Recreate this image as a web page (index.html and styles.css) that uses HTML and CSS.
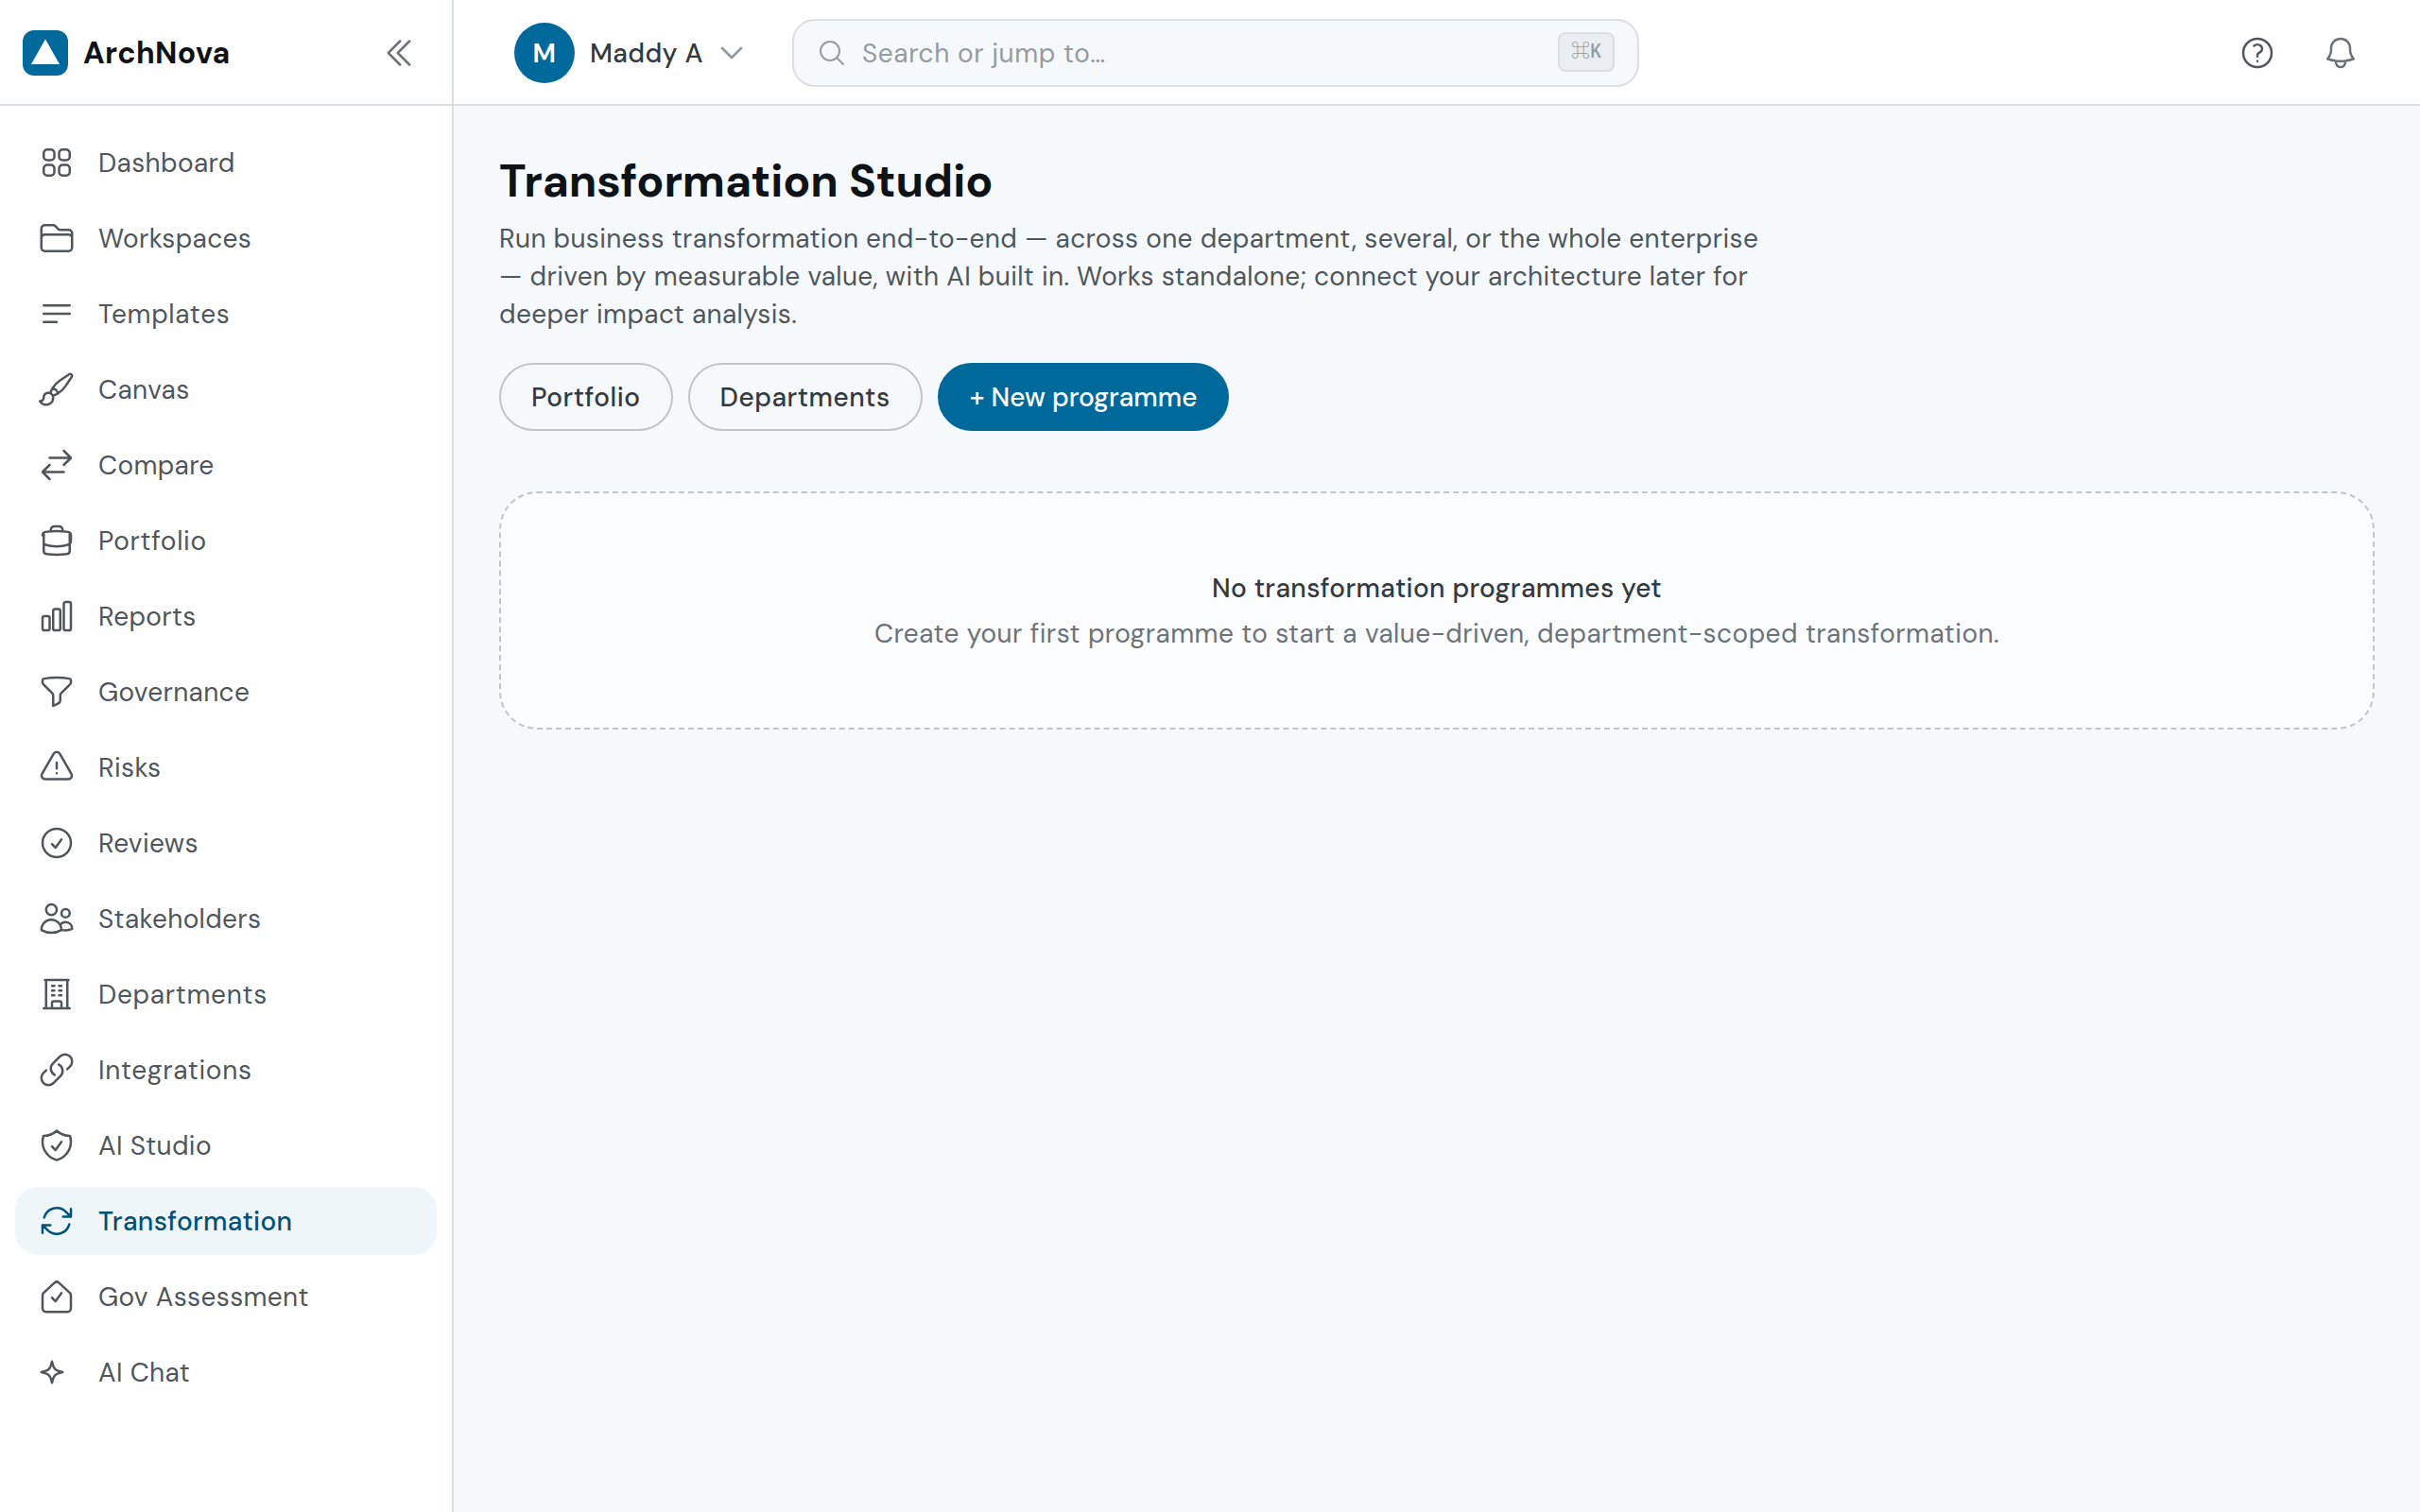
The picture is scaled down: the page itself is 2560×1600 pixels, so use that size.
FILE: index.html
```html
<!DOCTYPE html>
<html lang="en">
<head>
    <meta charset="UTF-8">
    <meta name="viewport" content="width=device-width, initial-scale=1.0">
    <title>Transformation Studio - ArchNova</title>
    <link rel="stylesheet" href="styles.css">
</head>
<body>
    <aside class="sidebar">
        <div class="sidebar-header">
            <svg class="logo" viewBox="0 0 48 48"><rect width="48" height="48" rx="12" fill="#00699c"/><path d="M24 9.5 39 36H9Z" fill="#fff"/></svg>
            <span class="brand">ArchNova</span>
            <button class="collapse" aria-label="Collapse sidebar">
                <svg class="icon" viewBox="0 0 24 24"><path d="m18.75 4.5-7.5 7.5 7.5 7.5m-6-15L5.25 12l7.5 7.5"/></svg>
            </button>
        </div>
        <nav class="nav">
            <a class="nav-item">
                <svg class="icon" viewBox="0 0 24 24"><path d="M3.75 6A2.25 2.25 0 0 1 6 3.75h2.25A2.25 2.25 0 0 1 10.5 6v2.25a2.25 2.25 0 0 1-2.25 2.25H6a2.25 2.25 0 0 1-2.25-2.25V6ZM3.75 15.75A2.25 2.25 0 0 1 6 13.5h2.25a2.25 2.25 0 0 1 2.25 2.25V18a2.25 2.25 0 0 1-2.25 2.25H6A2.25 2.25 0 0 1 3.75 18v-2.25ZM13.5 6a2.25 2.25 0 0 1 2.25-2.25H18A2.25 2.25 0 0 1 20.25 6v2.25A2.25 2.25 0 0 1 18 10.5h-2.25a2.25 2.25 0 0 1-2.25-2.25V6ZM13.5 15.75a2.25 2.25 0 0 1 2.25-2.25H18a2.25 2.25 0 0 1 2.25 2.25V18A2.25 2.25 0 0 1 18 20.25h-2.25A2.25 2.25 0 0 1 13.5 18v-2.25Z"/></svg>
                <span>Dashboard</span>
            </a>
            <a class="nav-item">
                <svg class="icon" viewBox="0 0 24 24"><path d="M2.25 12.75V12A2.25 2.25 0 0 1 4.5 9.75h15A2.25 2.25 0 0 1 21.75 12v.75m-8.69-6.44-2.12-2.12a1.5 1.5 0 0 0-1.061-.44H4.5A2.25 2.25 0 0 0 2.25 6v12a2.25 2.25 0 0 0 2.25 2.25h15A2.25 2.25 0 0 0 21.75 18V9a2.25 2.25 0 0 0-2.25-2.25h-5.379a1.5 1.5 0 0 1-1.06-.44Z"/></svg>
                <span>Workspaces</span>
            </a>
            <a class="nav-item wide">
                <svg class="icon" viewBox="0 0 24 24"><path d="M3.75 6.75h16.5M3.75 12h16.5m-16.5 5.25H12"/></svg>
                <span>Templates</span>
            </a>
            <a class="nav-item">
                <svg class="icon" viewBox="0 0 24 24"><path d="M9.53 16.122a3 3 0 0 0-5.78 1.128 2.25 2.25 0 0 1-2.4 2.245 4.5 4.5 0 0 0 8.4-2.245c0-.399-.078-.78-.22-1.128Zm0 0a15.998 15.998 0 0 0 3.388-1.62m-5.043-.025a15.994 15.994 0 0 1 1.622-3.395m3.42 3.42a15.995 15.995 0 0 0 4.764-4.648l3.876-5.814a1.151 1.151 0 0 0-1.597-1.597L14.146 6.32a15.996 15.996 0 0 0-4.649 4.763m3.42 3.42a6.776 6.776 0 0 0-3.42-3.42"/></svg>
                <span>Canvas</span>
            </a>
            <a class="nav-item">
                <svg class="icon" viewBox="0 0 24 24"><path d="M7.5 21 3 16.5m0 0L7.5 12M3 16.5h13.5m0-13.5L21 7.5m0 0L16.5 12M21 7.5H7.5"/></svg>
                <span>Compare</span>
            </a>
            <a class="nav-item wide">
                <svg class="icon" viewBox="0 0 24 24"><path d="M20.25 14.15v4.25c0 1.094-.787 2.036-1.872 2.18-2.087.277-4.216.42-6.378.42s-4.291-.143-6.378-.42c-1.085-.144-1.872-1.086-1.872-2.18v-10.6m16.5 6.35a2.18 2.18 0 0 0 .75-1.661V8.706c0-1.081-.768-2.015-1.837-2.175A48.114 48.114 0 0 0 12 6c-2.4 0-4.8.18-7.163.531C3.768 6.691 3 7.625 3 8.706M20.25 14.15V8m0 6.15c-.194.165-.42.295-.673.38A23.978 23.978 0 0 1 12 15.75c-2.648 0-5.195-.429-7.577-1.22a2.016 2.016 0 0 1-.673-.38M15.75 6.144V5.25A2.25 2.25 0 0 0 13.5 3h-3a2.25 2.25 0 0 0-2.25 2.25v.894"/></svg>
                <span>Portfolio</span>
            </a>
            <a class="nav-item">
                <svg class="icon" viewBox="0 0 24 24"><path d="M3 13.125C3 12.504 3.504 12 4.125 12h2.25c.621 0 1.125.504 1.125 1.125v6.75C7.5 20.496 6.996 21 6.375 21h-2.25A1.125 1.125 0 0 1 3 19.875v-6.75ZM9.75 8.625c0-.621.504-1.125 1.125-1.125h2.25c.621 0 1.125.504 1.125 1.125v11.25c0 .621-.504 1.125-1.125 1.125h-2.25a1.125 1.125 0 0 1-1.125-1.125V8.625ZM16.5 4.125c0-.621.504-1.125 1.125-1.125h2.25C20.496 3 21 3.504 21 4.125v15.75c0 .621-.504 1.125-1.125 1.125h-2.25a1.125 1.125 0 0 1-1.125-1.125V4.125Z"/></svg>
                <span>Reports</span>
            </a>
            <a class="nav-item">
                <svg class="icon" viewBox="0 0 24 24"><path d="M12 3c2.755 0 5.455.232 8.083.678.533.09.917.556.917 1.096v1.044a2.25 2.25 0 0 1-.659 1.591l-5.432 5.432a2.25 2.25 0 0 0-.659 1.591v2.927a2.25 2.25 0 0 1-1.244 2.013L9.75 21v-6.568a2.25 2.25 0 0 0-.659-1.591L3.659 7.409A2.25 2.25 0 0 1 3 5.818V4.774c0-.54.384-1.006.917-1.096A48.32 48.32 0 0 1 12 3Z"/></svg>
                <span>Governance</span>
            </a>
            <a class="nav-item">
                <svg class="icon" viewBox="0 0 24 24"><path d="M12 9v3.75m-9.303 3.376c-.866 1.5.217 3.374 1.948 3.374h14.71c1.73 0 2.813-1.874 1.948-3.374L13.949 3.378c-.866-1.5-3.032-1.5-3.898 0L2.697 16.126ZM12 15.75h.007v.008H12v-.008Z"/></svg>
                <span>Risks</span>
            </a>
            <a class="nav-item">
                <svg class="icon" viewBox="0 0 24 24"><path d="M9 12.75 11.25 15 15 9.75M21 12a9 9 0 1 1-18 0 9 9 0 0 1 18 0Z"/></svg>
                <span>Reviews</span>
            </a>
            <a class="nav-item">
                <svg class="icon" viewBox="0 0 24 24"><path d="M15 19.128a9.38 9.38 0 0 0 2.625.372 9.337 9.337 0 0 0 4.121-.952 4.125 4.125 0 0 0-7.533-2.493M15 19.128v-.003c0-1.113-.285-2.16-.786-3.07M15 19.128v.106A12.318 12.318 0 0 1 8.624 21c-2.331 0-4.512-.645-6.374-1.766l-.001-.109a6.375 6.375 0 0 1 11.964-3.07M12 6.375a3.375 3.375 0 1 1-6.75 0 3.375 3.375 0 0 1 6.75 0Zm8.25 2.25a2.625 2.625 0 1 1-5.25 0 2.625 2.625 0 0 1 5.25 0Z"/></svg>
                <span>Stakeholders</span>
            </a>
            <a class="nav-item wide">
                <svg class="icon" viewBox="0 0 24 24"><path d="M3.75 21h16.5M4.5 3h15M5.25 3v18m13.5-18v18M9 6.75h1.5m-1.5 3h1.5m-1.5 3h1.5m3-6H15m-1.5 3H15m-1.5 3H15M9 21v-3.375c0-.621.504-1.125 1.125-1.125h3.75c.621 0 1.125.504 1.125 1.125V21"/></svg>
                <span>Departments</span>
            </a>
            <a class="nav-item wide">
                <svg class="icon" viewBox="0 0 24 24"><path d="M13.19 8.688a4.5 4.5 0 0 1 1.242 7.244l-4.5 4.5a4.5 4.5 0 0 1-6.364-6.364l1.757-1.757m13.35-.622 1.757-1.757a4.5 4.5 0 0 0-6.364-6.364l-4.5 4.5a4.5 4.5 0 0 0 1.242 7.244"/></svg>
                <span>Integrations</span>
            </a>
            <a class="nav-item">
                <svg class="icon" viewBox="0 0 24 24"><path d="M9 12.75 11.25 15 15 9.75m-3-7.036A11.959 11.959 0 0 1 3.598 6 11.99 11.99 0 0 0 3 9.749c0 5.592 3.824 10.29 9 11.623 5.176-1.332 9-6.03 9-11.622 0-1.31-.21-2.571-.598-3.751h-.152c-3.196 0-6.1-1.248-8.25-3.285Z"/></svg>
                <span>AI Studio</span>
            </a>
            <a class="nav-item active">
                <svg class="icon" viewBox="0 0 24 24"><path d="M16.023 9.348h4.992v-.001M2.985 19.644v-4.992m0 0h4.992m-4.993 0 3.181 3.183a8.25 8.25 0 0 0 13.803-3.7M4.031 9.865a8.25 8.25 0 0 1 13.803-3.7l3.181 3.182m0-4.991v4.99"/></svg>
                <span>Transformation</span>
            </a>
            <a class="nav-item">
                <svg class="icon" viewBox="0 0 24 24"><path d="M9 12.75 11.25 15 15 9.75M3 11.25c0-.6.24-1.17.66-1.59l6.98-6.4a2 2 0 0 1 2.72 0l6.98 6.4c.42.42.66.99.66 1.59v8.25a2.25 2.25 0 0 1-2.25 2.25H5.25A2.25 2.25 0 0 1 3 19.5v-8.25Z"/></svg>
                <span>Gov Assessment</span>
            </a>
            <a class="nav-item">
                <svg class="icon" viewBox="0 0 24 24"><path d="M9.813 15.904 9 18.75l-.813-2.846a4.5 4.5 0 0 0-3.09-3.09L2.25 12l2.846-.813a4.5 4.5 0 0 0 3.09-3.09L9 5.25l.813 2.846a4.5 4.5 0 0 0 3.09 3.09L15.75 12l-2.846.813a4.5 4.5 0 0 0-3.09 3.09Z"/></svg>
                <span>AI Chat</span>
            </a>
        </nav>
    </aside>

    <div class="page">
        <header class="topbar">
            <button class="user">
                <span class="avatar">M</span>
                <span class="user-name">Maddy A</span>
                <svg class="icon chevron" viewBox="0 0 24 24"><path d="m19.5 8.25-7.5 7.5-7.5-7.5"/></svg>
            </button>
            <div class="search">
                <svg class="icon" viewBox="0 0 24 24"><path d="m21 21-5.197-5.197m0 0A7.5 7.5 0 1 0 5.196 5.196a7.5 7.5 0 0 0 10.607 10.607Z"/></svg>
                <span class="search-text">Search or jump to…</span>
                <kbd>⌘K</kbd>
            </div>
            <div class="actions">
                <svg class="icon" viewBox="0 0 24 24"><path d="M9.879 7.519c1.171-1.025 3.071-1.025 4.242 0 1.172 1.025 1.172 2.687 0 3.712-.203.179-.43.326-.67.442-.745.361-1.45.999-1.45 1.827v.75M21 12a9 9 0 1 1-18 0 9 9 0 0 1 18 0Zm-9 5.25h.008v.008H12v-.008Z"/></svg>
                <svg class="icon bell" viewBox="0 0 24 24"><path d="M14.857 17.082a23.848 23.848 0 0 0 5.454-1.31A8.967 8.967 0 0 1 18 9.75V9A6 6 0 0 0 6 9v.75a8.967 8.967 0 0 1-2.312 6.022c1.733.64 3.56 1.085 5.455 1.31m5.714 0a24.255 24.255 0 0 1-5.714 0m5.714 0a3 3 0 1 1-5.714 0"/></svg>
            </div>
        </header>

        <main class="content">
            <h1>Transformation Studio</h1>
            <p class="intro">Run business transformation end-to-end — across one department, several, or the whole enterprise — driven by measurable value, with AI built in. Works standalone; connect your architecture later for deeper impact analysis.</p>
            <div class="buttons">
                <button class="btn">Portfolio</button>
                <button class="btn">Departments</button>
                <button class="btn btn-primary">+ New programme</button>
            </div>
            <section class="empty">
                <p class="empty-title">No transformation programmes yet</p>
                <p class="empty-text">Create your first programme to start a value-driven, department-scoped transformation.</p>
            </section>
        </main>
    </div>
</body>
</html>
```
FILE: styles.css
```css
* {
    box-sizing: border-box;
}

body {
    display: flex;
    margin: 0;
    height: 100vh;
    font-family: "DM Sans", Inter, sans-serif;
    font-size: 28px;
    line-height: 40px;
    letter-spacing: 0.35px;
    background: #f5f9fc;
    color: #4f565c;
}

h1, p {
    margin: 0;
}

button {
    font: inherit;
    letter-spacing: inherit;
    color: inherit;
    background: none;
    border: none;
    padding: 0;
}

.icon {
    flex: none;
    width: 40px;
    height: 40px;
    fill: none;
    stroke: currentColor;
    stroke-width: 1.5;
    stroke-linecap: round;
    stroke-linejoin: round;
}

/* Sidebar */
.sidebar {
    flex: none;
    width: 480px;
    background: #fff;
    border-right: 2px solid #d9dfe3;
}

.sidebar-header {
    display: flex;
    align-items: center;
    height: 112px;
    padding: 2px 36px 0 24px;
    border-bottom: 2px solid #d9dfe3;
}

.logo {
    width: 48px;
    height: 48px;
}

.brand {
    margin-left: 16px;
    font-size: 32px;
    font-weight: 700;
    color: #0d1317;
}

.collapse {
    display: flex;
    margin-left: auto;
    color: #6b7379;
}

.nav {
    display: flex;
    flex-direction: column;
    gap: 8px;
    padding: 24px 16px;
}

.nav-item {
    display: flex;
    align-items: center;
    gap: 24px;
    height: 72px;
    padding: 0 24px;
    border-radius: 24px;
}

.nav-item span {
    padding-top: 2px;
}

.nav-item.wide {
    letter-spacing: 0.7px;
}

.nav-item.active {
    background: #eff6fa;
    color: #00527a;
    font-weight: 500;
}

/* Top bar */
.page {
    flex: 1;
    min-width: 0;
}

.topbar {
    display: flex;
    align-items: center;
    height: 112px;
    padding: 2px 64px 0;
    background: #fff;
    border-bottom: 2px solid #d9dfe3;
}

.user {
    display: flex;
    align-items: center;
    width: 246px;
    color: #343a40;
    font-weight: 500;
}

.avatar {
    width: 64px;
    height: 64px;
    border-radius: 50%;
    background: #00699c;
    color: #fff;
    font-weight: 600;
    line-height: 65px;
    text-align: center;
}

.user-name {
    margin-left: 16px;
    padding-top: 2px;
}

.chevron {
    width: 32px;
    height: 32px;
    margin-left: auto;
    color: #959ca1;
    stroke-width: 2;
}

.search {
    display: flex;
    align-items: center;
    width: 896px;
    height: 72px;
    margin-left: 48px;
    padding: 0 24px;
    border: 2px solid #d9dfe3;
    border-radius: 24px;
    background: #f5f9fc;
    color: #959ca1;
}

.search .icon {
    width: 32px;
    height: 32px;
}

.search-text {
    flex: 1;
    margin-left: 16px;
    padding-top: 2px;
    letter-spacing: 0.6px;
}

kbd {
    width: 60px;
    height: 42px;
    margin-bottom: 2px;
    border: 2px solid #d9dfe3;
    border-radius: 8px;
    background: #e9eef3;
    font-family: "IBM Plex Mono", "Noto Sans CJK SC", monospace;
    font-size: 20px;
    font-weight: 500;
    line-height: 36px;
    letter-spacing: 0;
    text-align: center;
}

.actions {
    display: flex;
    gap: 48px;
    margin-left: auto;
}

.bell {
    color: #6b7379;
}

/* Content */
.content {
    padding: 48px;
}

h1 {
    font-size: 48px;
    line-height: 64px;
    font-weight: 700;
    letter-spacing: -0.15px;
    color: #0d1317;
}

.intro {
    max-width: 1344px;
    margin-top: 9px;
}

.buttons {
    display: flex;
    gap: 16px;
    margin-top: 31px;
}

.btn {
    height: 72px;
    padding: 2px 32px 0;
    border: 2px solid #c0c5c9;
    border-radius: 36px;
    color: #343a40;
    font-weight: 500;
    letter-spacing: 0.5px;
}

.btn-primary {
    border-color: #00699c;
    background: #00699c;
    color: #fff;
    letter-spacing: 0;
}

.empty {
    margin-top: 64px;
    padding: 81px 0 79px;
    border: 2px dashed #c0c5c9;
    border-radius: 40px;
    background: #fbfcfe;
    text-align: center;
}

.empty-title {
    color: #343a40;
    font-weight: 500;
}

.empty-text {
    margin-top: 8px;
    color: #6b7379;
    letter-spacing: 0.45px;
}
```
